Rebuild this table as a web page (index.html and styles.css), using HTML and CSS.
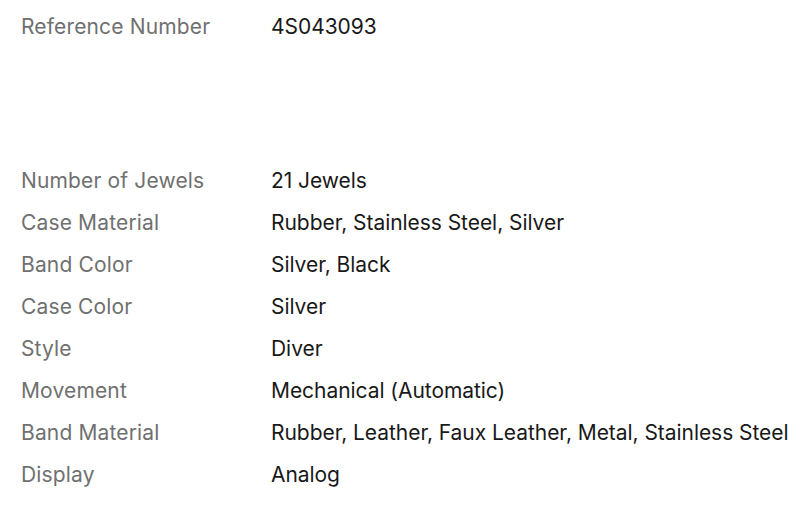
FILE: index.html
```html
<!DOCTYPE html>
<html>
<head>
<meta charset="utf-8">
<link rel="stylesheet" href="styles.css">
</head>
<body>
<div class="specs">
  <dl class="group">
    <div class="row"><dt>Reference Number</dt><dd>4S043093</dd></div>
  </dl>
  <dl class="group second">
    <div class="row"><dt>Number of Jewels</dt><dd>21 Jewels</dd></div>
    <div class="row"><dt>Case Material</dt><dd>Rubber, Stainless Steel, Silver</dd></div>
    <div class="row"><dt>Band Color</dt><dd>Silver, Black</dd></div>
    <div class="row"><dt>Case Color</dt><dd>Silver</dd></div>
    <div class="row"><dt>Style</dt><dd>Diver</dd></div>
    <div class="row"><dt>Movement</dt><dd>Mechanical (Automatic)</dd></div>
    <div class="row"><dt>Band Material</dt><dd>Rubber, Leather, Faux Leather, Metal, Stainless Steel</dd></div>
    <div class="row"><dt>Display</dt><dd>Analog</dd></div>
  </dl>
</div>
</body>
</html>
```
FILE: styles.css
```css
html, body {
  margin: 0;
  padding: 0;
  background: #ffffff;
}
body {
  font-family: Inter, "Open Sans", sans-serif;
  font-size: 21px;
  overflow: hidden;
}
.specs {
  padding: 6px 0 0 21px;
}
.group {
  margin: 0;
}
.second {
  margin-top: 112px;
}
.row {
  display: grid;
  grid-template-columns: 250px 1fr;
  height: 42px;
  line-height: 42px;
}
dt {
  color: #707070;
  white-space: nowrap;
  letter-spacing: 0.15px;
}
dd {
  margin: 0;
  color: #191919;
  white-space: nowrap;
  letter-spacing: -0.05px;
}
```
